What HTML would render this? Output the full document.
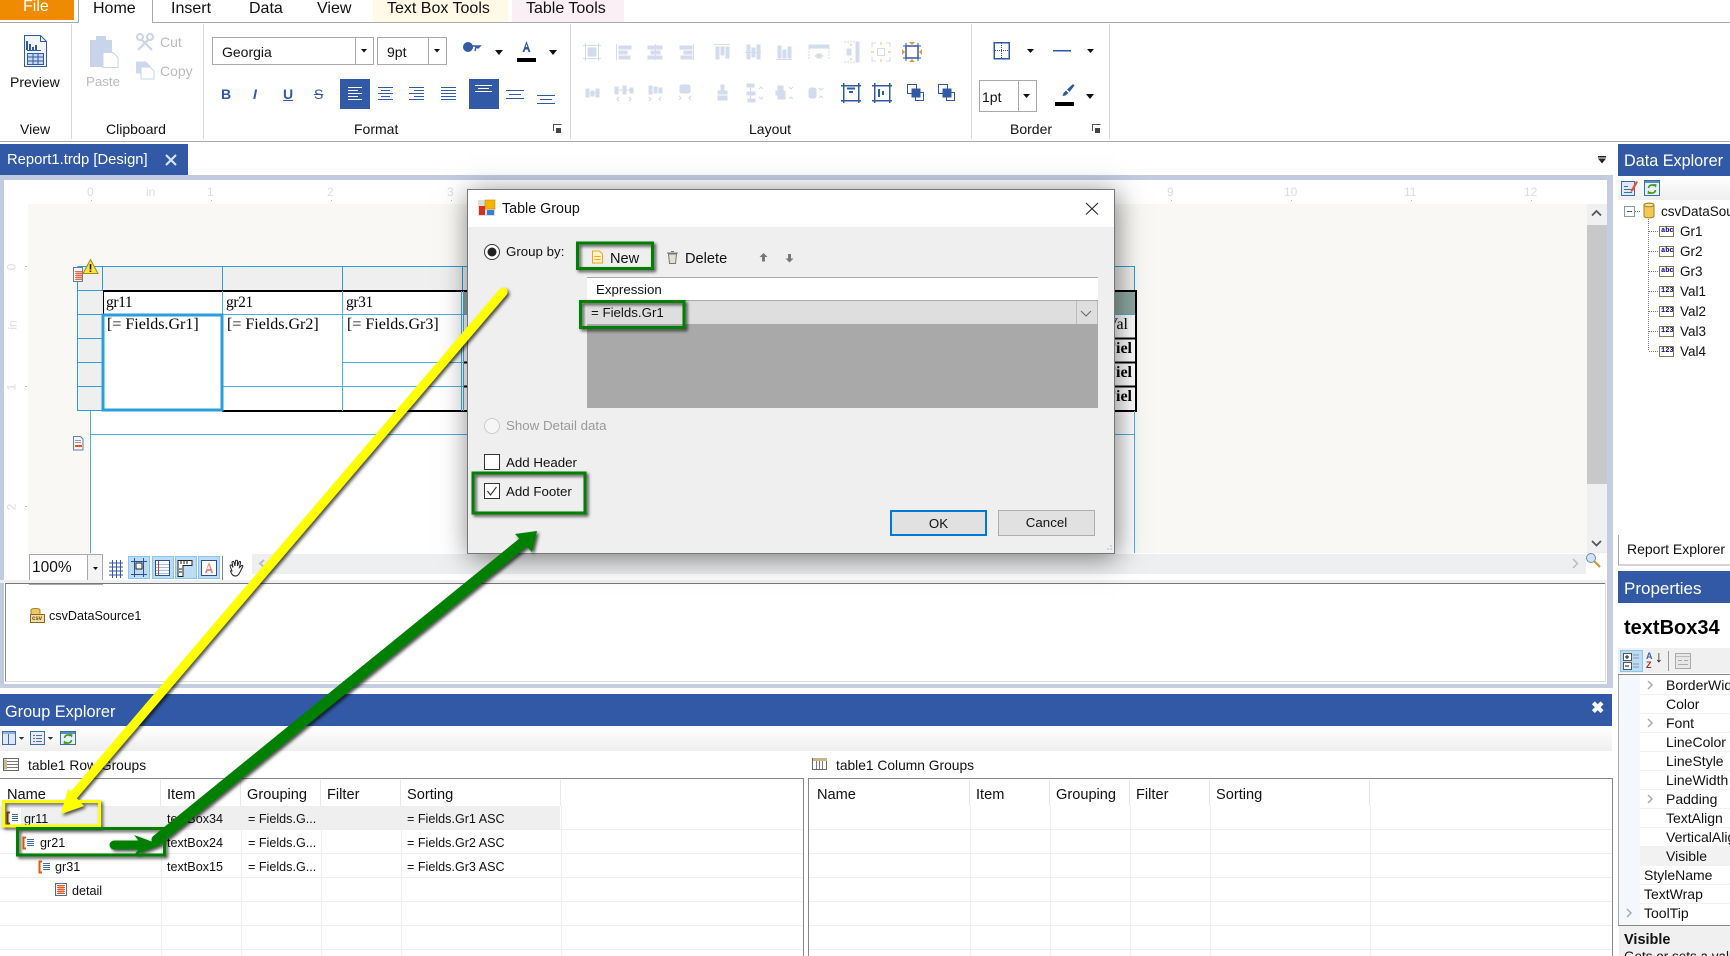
<!DOCTYPE html>
<html lang="en"><head><meta charset="utf-8"><title>Table Group</title>
<style>
html,body{margin:0;padding:0;background:#fff}
#p{position:relative;width:1730px;height:956px;overflow:hidden;background:#fff;font-family:"Liberation Sans",sans-serif;color:#111}
#p svg{position:absolute;left:0;top:0}
.t{position:absolute;white-space:nowrap;line-height:1}
.s{font-size:14px}.f{font-size:16px}.d{color:#bbb}
.m{font-size:13.3px}.g{font-size:12.6px}.h{font-size:14.6px}
.se{font-family:"Liberation Serif",serif;font-size:16px;color:#000}
.se2{letter-spacing:-.4px;font-size:15.5px}
.r{font-size:12px;color:#ddd}
.w{color:#fff}
.dl{position:absolute;left:467px;top:189px;width:646px;height:363px;background:#efefef;border:1px solid #777;box-shadow:2px 4px 26px rgba(0,0,0,.5)}
.dt{position:absolute;left:0;top:0;width:646px;height:37px;background:#fff}
.b{position:absolute;top:510px;height:26px;box-sizing:border-box;background:#e1e1e1;text-align:center;font-size:13.3px;line-height:24px}
.ic{font-size:7px;font-weight:bold;color:#000080;font-family:"Liberation Mono",monospace}
</style></head><body><div id="p">

<svg width="1730" height="956" viewBox="0 0 1730 956">
<g shape-rendering="crispEdges">
<rect x="0" y="0" width="74" height="20" fill="#ee8b00"/>
<rect x="373" y="0" width="135" height="22" fill="#fff9e7"/>
<rect x="512" y="0" width="112" height="22" fill="#fbeff6"/>
<path d="M0 22.5h78M152 22.5h1578M0 141.5h1730" stroke="#aaa" fill="none"/>
<path d="M78.5 0v23M152.5 0v23" stroke="#aaa" fill="none"/>
<path d="M71.5 24v115M203.5 24v115M570.5 24v115M971.5 24v115M1109.5 24v115" stroke="#d8d8d8" fill="none"/>
<rect x="212.5" y="37.5" width="161" height="27" fill="#fff" stroke="#aaa"/><path d="M355.5 38v27" stroke="#aaa"/>
<rect x="377.5" y="37.5" width="69" height="27" fill="#fff" stroke="#aaa"/><path d="M428.5 38v27" stroke="#aaa"/>
<rect x="979.5" y="80.5" width="57" height="31" fill="#fff" stroke="#aaa"/><path d="M1018.5 81v31" stroke="#aaa"/>
<rect x="340" y="79" width="30" height="30" fill="#3259a5"/>
<rect x="469" y="79" width="30" height="30" fill="#3259a5"/>
<rect x="0" y="144" width="188" height="31" fill="#3259a5"/>
<rect x="0" y="175" width="1613" height="5" fill="#c0cbe0"/>
<rect x="0" y="175" width="4" height="513" fill="#c0cbe0"/>
<rect x="1607" y="175" width="6" height="513" fill="#c5cee0"/>
<rect x="0" y="684" width="1613" height="4" fill="#c5cee0"/>
<rect x="4" y="580" width="1603" height="3" fill="#f0f0f0"/>
<rect x="5" y="583" width="1601" height="1" fill="#777"/>
<rect x="5" y="583" width="1" height="99" fill="#888"/>
<rect x="5" y="681" width="1601" height="1" fill="#ddd"/><rect x="1605" y="583" width="1" height="99" fill="#ddd"/>
<rect x="28" y="204" width="1559" height="349" fill="#f9f8f5"/>
<rect x="91" y="410" width="1043" height="143" fill="#fff"/>
<rect x="1587" y="204" width="20" height="349" fill="#f0f0f0"/>
<rect x="1587" y="225" width="20" height="259" fill="#c8c8c8"/>
<rect x="252" y="554" width="1334" height="20" fill="#eeeff0"/>
<path d="M91 200.5h1M211 200.5h1M331 200.5h1M451 200.5h1M571 200.5h1M691 200.5h1M811 200.5h1M931 200.5h1M1051 200.5h1M1171 200.5h1M1291 200.5h1M1411 200.5h1M1531 200.5h1M25 266.5h2M25 386.5h2M25 506.5h2" stroke="#bbb" fill="none"/>
<rect x="77" y="266" width="1058" height="25" fill="#efefef"/>
<rect x="77" y="290" width="26" height="120" fill="#efefef"/>
<rect x="103" y="291" width="1033" height="120" fill="#fff"/>
<rect x="463" y="292" width="672" height="22" fill="#8fa9a3"/>
<path d="M77.5 266.5h1057M77.5 266.5v144h25M77.5 290.5h1057M77.5 314.5h26M77.5 338.5h26M77.5 362.5h26M77.5 386.5h26M102.5 266v24M222.5 266v24M342.5 266v24M462.5 266v24" stroke="#2a9fdb" fill="none"/>
<path d="M1134.5 266v24" stroke="#2a9fdb" fill="none"/>
<path d="M103 291h1033M1136 290v121M222 411h915M463 338.5h673M463 362.5h673M463 386.5h673" stroke="#000" stroke-width="2" fill="none"/>
<path d="M103.5 291v24" stroke="#000" fill="none"/>
<path d="M103 314.5h1032M222.5 291v120M342.5 291v120M223 386.5h240M343 362.5h120M463.5 291v120M461.5 291v120" stroke="#4ab0e0" fill="none"/>
<rect x="103" y="315" width="119" height="95" fill="#fff" stroke="#2a9fdb" stroke-width="3"/>
<path d="M91 434.5h1043M90.5 411v142M1134.5 411v142" stroke="#4ab0e0" fill="none"/>
<rect x="29.5" y="554.5" width="73" height="30" fill="#fff" stroke="#aaa"/><rect x="88" y="555" width="14" height="25" fill="#f4f4f4"/><path d="M87.5 555v25" stroke="#aaa"/>
<rect x="0" y="580" width="110" height="3" fill="#f0f0f0"/>
<rect x="5" y="583" width="110" height="1" fill="#777"/>
<path d="M222.5 556v24" stroke="#888"/>
<rect x="128.5" y="556.5" width="21" height="22" fill="#bcdcf4" stroke="#8cc4f0"/>
<rect x="152.5" y="556.5" width="21" height="22" fill="#bcdcf4" stroke="#8cc4f0"/>
<rect x="175.5" y="556.5" width="21" height="22" fill="#bcdcf4" stroke="#8cc4f0"/>
<rect x="198.5" y="556.5" width="21" height="22" fill="#bcdcf4" stroke="#8cc4f0"/>
<rect x="0" y="694" width="1612" height="32" fill="#3259a5"/>
<rect x="1618" y="144" width="112" height="32" fill="#3259a5"/>
<rect x="1618" y="571" width="112" height="32" fill="#3259a5"/>
</g>
<defs><linearGradient id="gg" x1="0" y1="0" x2="0" y2="1"><stop offset="0" stop-color="#fff"/><stop offset="1" stop-color="#efefef"/></linearGradient></defs>
<rect x="0" y="726" width="1612" height="25" fill="url(#gg)"/>
<rect x="1618" y="176" width="112" height="24" fill="url(#gg)"/>
<g shape-rendering="crispEdges">
<rect x="0" y="806" width="560" height="23" fill="#efefef"/>
<rect x="10" y="808" width="11" height="18" fill="#fff"/>
<path d="M0 778.5h804M808 778.5h805M803.5 778v178M808.5 778v178M1612.5 778v178" stroke="#888" fill="none"/>
<path d="M0 829.5h803M0 853.5h803M0 877.5h803M0 901.5h803M0 925.5h803M0 949.5h803M809 829.5h803M809 853.5h803M809 877.5h803M809 901.5h803M809 925.5h803M809 949.5h803M161.5 806v150M241.5 806v150M321.5 806v150M401.5 806v150M561.5 806v150M970.5 806v150M1050.5 806v150M1130.5 806v150M1210.5 806v150M1370.5 806v150" stroke="#eee" fill="none"/>
<path d="M160.5 780v26M240.5 780v26M320.5 780v26M400.5 780v26M560.5 780v26M969.5 780v26M1049.5 780v26M1129.5 780v26M1209.5 780v26M1369.5 780v26" stroke="#e8e8e8" fill="none"/>
<path d="M10 812.5H7.5v11H10" stroke="#8a4a14" stroke-width="2" fill="none"/>
<path d="M12 814.5h6M12 816.5h6M12 818.5h6M12 820.5h6" stroke="#3a6ea5" fill="none"/>
<path d="M26 837.5h-2.5v11H26" stroke="#e85a00" stroke-width="2" fill="none"/>
<path d="M27 839.5h7M27 841.5h7M27 843.5h7M27 845.5h7" stroke="#3a6ea5" fill="none"/>
<path d="M42 861.5h-2.5v11H42" stroke="#e85a00" stroke-width="2" fill="none"/>
<path d="M43 863.5h7M43 865.5h7M43 867.5h7M43 869.5h7" stroke="#3a6ea5" fill="none"/>
<rect x="55.5" y="883.5" width="11" height="12" fill="#fff" stroke="#556b8a"/>
<path d="M57 885.5h8M57 887.5h8M57 889.5h8M57 891.5h8M57 893.5h8M59 885v9M61 885v9M63 885v9" stroke="#e0602a" fill="none"/>
<rect x="3.5" y="758.5" width="15" height="12" fill="#fff" stroke="#667"/>
<path d="M4 761.5h14M4 764.5h14M4 767.5h14" stroke="#778"/>
<path d="M4 759.5v10h3v-10z" fill="#c9b886"/>
<rect x="812.5" y="758.5" width="14" height="11" fill="#fff" stroke="#667"/>
<rect x="813" y="758" width="14" height="3" fill="#c9b886"/>
<path d="M816.5 761v8M819.5 761v8M822.5 761v8" stroke="#778"/>
<rect x="2.5" y="731.5" width="13" height="13" fill="#dfe8f4" stroke="#3a6ea5"/><path d="M8.5 732v12" stroke="#3a6ea5"/><rect x="3" y="732" width="12" height="2" fill="#8fb0d8"/>
<path d="M19 737h5l-2.500 3z" fill="#333"/>
<rect x="30.500" y="731.500" width="14" height="13" fill="#e4ecf6" stroke="#3a6ea5"/><path d="M33 735.500h2M36 735.500h6M33 738.500h2M36 738.500h6M33 741.500h2M36 741.500h6" stroke="#668"/>
<path d="M48 737h5l-2.500 3z" fill="#333"/>
<rect x="60.500" y="731.500" width="15" height="13" fill="#e8f0f8" stroke="#3a6ea5"/><rect x="61" y="732" width="14" height="2" fill="#5a8ac8"/>
<rect x="1621.500" y="181.500" width="13" height="14" fill="#dfe8f4" stroke="#3a6ea5"/><path d="M1624 186.500h4M1624 189.500h8M1624 192.500h8" stroke="#3a6ea5"/>
<rect x="1644.500" y="180.500" width="15" height="15" fill="#e8f0f8" stroke="#3a6ea5"/><rect x="1645" y="181" width="14" height="2" fill="#5a8ac8"/>
<rect x="1624.500" y="206.500" width="10" height="10" fill="#fff" stroke="#8899aa"/><path d="M1627 211.500h5" stroke="#3a5a8a"/>
<path d="M1635 211.500h6M1648.500 219v132M1649 231.500h10M1649 251.500h10M1649 271.500h10M1649 291.500h10M1649 311.500h10M1649 331.500h10M1649 351.500h10" stroke="#777" stroke-dasharray="1 1" fill="none"/>
<g fill="#fff" stroke="#8a7a50">
<rect x="1659.500" y="226.500" width="14" height="10"/><rect x="1659.500" y="246.500" width="14" height="10"/><rect x="1659.500" y="266.500" width="14" height="10"/><rect x="1659.500" y="286.500" width="14" height="10"/><rect x="1659.500" y="306.500" width="14" height="10"/><rect x="1659.500" y="326.500" width="14" height="10"/><rect x="1659.500" y="346.500" width="14" height="10"/>
</g>
<path d="M1618.500 535v30h112M1618.500 674v252" stroke="#aaa" fill="none"/>
<rect x="1618" y="648" width="112" height="25" fill="#f0f0f0"/>
<rect x="1620.500" y="650.500" width="22" height="21" fill="#bcdcf4" stroke="#8cc4f0"/>
<path d="M1668.500 651v20" stroke="#999"/>
<rect x="1619" y="675" width="21" height="250" fill="#f4f7fb"/>
<rect x="1640" y="847" width="90" height="19" fill="#f2f2f2"/>
<path d="M1640 694.500h90M1640 713.500h90M1640 732.500h90M1640 751.500h90M1640 770.500h90M1640 789.500h90M1640 808.500h90M1640 827.500h90M1640 846.500h90M1640 865.500h90M1640 884.500h90M1640 903.500h90" stroke="#f2f2f2"/>
<path d="M1618 674.500h112M1618 925.500h112" stroke="#888"/>
<rect x="1619" y="926" width="111" height="30" fill="#f0f0f0"/>
<rect x="1623.500" y="653.500" width="8" height="7" fill="#fff" stroke="#555"/><rect x="1623.500" y="662.500" width="8" height="7" fill="#fff" stroke="#555"/>
<path d="M1633 655h6M1633 658h6M1633 664h6M1633 667h6" stroke="#8899aa"/>
<path d="M1625 657h4M1627 655v4M1625 666h4" stroke="#111"/>
<rect x="1675.500" y="653.500" width="15" height="15" fill="#e8e8e8" stroke="#aaa"/><path d="M1678 660.500h4M1684 660.500h4M1678 664.500h10" stroke="#aaa"/><path d="M1676 656.500h14" stroke="#bbb"/>
</g>
<!-- pencil and refresh arrows -->
<path d="M1631 190l5-9 2 1-5 9-2.500 1z" fill="#e8503a"/>
<g fill="none" stroke="#3e9a12" stroke-width="1.600"><path d="M1648.500 188a3.500 3.500 0 0 1 6-2M1655.500 190a3.500 3.500 0 0 1-6 2"/></g>
<path d="M1653 184l3.500.2-.5 3.500zM1651 194l-3.500-.2.500-3.500z" fill="#3e9a12"/>
<g fill="none" stroke="#3e9a12" stroke-width="1.600"><path d="M64.500 738a3.500 3.500 0 0 1 6-2M71.500 740a3.500 3.500 0 0 1-6 2"/></g>
<path d="M69 734l3.500.2-.5 3.500zM67 744l-3.500-.2.500-3.500z" fill="#3e9a12"/>
<g fill="none" stroke="#3259a5">
<path d="M24.500 35.500h16l6 6v25h-22z" fill="#f2f6fc"/><path d="M40.500 35.500v6h6"/>
<path d="M27 50V41M30 50V44M33 50v-3M36 50v-5" stroke-width="2"/>
<path d="M27 50.500h14"/>
<rect x="27.500" y="53.500" width="16" height="11" fill="#c8d8f0"/><path d="M27.500 57h16M27.500 61h16M33 53.500v11M38 53.500v11"/>
</g>
<g fill="#c8d4ea">
<rect x="90" y="40" width="22" height="27"/><rect x="96" y="36" width="10" height="5"/>
<path d="M103 52.500h10l5 5v10h-15z" fill="#fff" stroke="#c8d4ea"/>
<path d="M136 61.500h10l4 4v8h-14z" opacity=".9"/>
<path d="M141 67h9l4 4v8h-13z" fill="#fff" stroke="#c8d4ea"/>
</g>
<g fill="none" stroke="#c8d4ea" stroke-width="2">
<circle cx="140" cy="37" r="3"/><circle cx="150" cy="37" r="3"/><path d="M142 40l10 10M148 40l-10 10"/>
</g>
<g fill="#111">
<path d="M361 49h6l-3 3.500zM434 49h6l-3 3.500zM495 50h8l-4 5zM549 50h8l-4 5zM1027 49h7l-3.500 4zM1087 49h7l-3.500 4zM1023 94h7l-3.500 4zM1086 94h8l-4 5zM93 567h5l-2.500 3z"/>
</g>
<path d="M463 47a5 5 0 0 1 5-5 5 5 0 0 1 5 5 5 5 0 0 1-5 5 5 5 0 0 1-5-5z" fill="#3259a5"/><path d="M472 46h8l-2 2-2-1-1 4" fill="none" stroke="#3259a5" stroke-width="1.500"/>
<path d="M526.500 41l-4 11h2l.8-2.500h2.400l.8 2.500h2zM526.500 44l.8 3h-1.600z" fill="#3259a5" fill-rule="evenodd"/>
<rect x="517" y="58" width="19" height="4" fill="#000"/>
<g stroke="#fff" shape-rendering="crispEdges"><path d="M348 87.500h14M348 90.500h10M348 93.500h14M348 96.500h10M348 99.500h14"/><path d="M475 85.500h17M478 88.500h11M475 91.500h17"/></g>
<g stroke="#3259a5" shape-rendering="crispEdges"><path d="M378 87.500h15M381 90.500h9M378 93.500h15M381 96.500h9M378 99.500h15M409 87.500h15M414 90.500h10M409 93.500h15M414 96.500h10M409 99.500h15M441 87.500h15M441 90.500h15M441 93.500h15M441 96.500h15M441 99.500h15M506 90.500h18M509 94.500h12M506 98.500h18M537 95.500h18M540 99.500h12M537 103.500h18"/></g>
<g fill="none" stroke="#555"><path d="M553.500 131v-6.500h8M1092.500 131v-6.500h8"/></g>
<path d="M556 128h5v5h-5zM1095 128h5v5h-5z" fill="#444"/>
<g fill="#d3dcec" stroke="#d3dcec" shape-rendering="crispEdges">
<g transform="translate(592,52)"><path d="M-9-6.500H9M-9 6.500H9M-6.500-9V9M6.500-9V9" fill="none"/><rect x="-4" y="-4" width="8" height="8"/></g>
<g transform="translate(624,52)"><path d="M-7.500-8V8" fill="none"/><rect x="-5" y="-6" width="12" height="3"/><rect x="-5" y="-1" width="8" height="3"/><rect x="-5" y="4" width="11" height="3"/></g>
<g transform="translate(655,52)"><path d="M.5-8V8" fill="none"/><rect x="-7" y="-6" width="14" height="3"/><rect x="-4" y="-1" width="9" height="3"/><rect x="-7" y="4" width="14" height="3"/></g>
<g transform="translate(686,52)"><path d="M7.500-8V8" fill="none"/><rect x="-6" y="-6" width="12" height="3"/><rect x="-2" y="-1" width="8" height="3"/><rect x="-5" y="4" width="11" height="3"/></g>
<g transform="translate(722,52)"><path d="M-8-7.500H8" fill="none"/><rect x="-6" y="-5" width="3" height="12"/><rect x="-1" y="-5" width="3" height="8"/><rect x="4" y="-5" width="3" height="11"/></g>
<g transform="translate(753,52)"><path d="M-8 .5H8" fill="none"/><rect x="-6" y="-7" width="3" height="14"/><rect x="-1" y="-4" width="3" height="9"/><rect x="4" y="-7" width="3" height="14"/></g>
<g transform="translate(784,52)"><path d="M-8 7.500H8" fill="none"/><rect x="-6" y="-6" width="3" height="12"/><rect x="-1" y="-2" width="3" height="8"/><rect x="4" y="-5" width="3" height="11"/></g>
<g transform="translate(819,52)"><rect x="-10" y="-7" width="20" height="3"/><path d="M-10-4V7M10-4V7" fill="none" stroke-dasharray="2 1"/><rect x="-2" y="2" width="4" height="4"/></g>
<g transform="translate(851,52)"><rect x="5" y="-10" width="3" height="20"/><path d="M-7-10H5M-7 10H5" fill="none" stroke-dasharray="2 1"/><rect x="-4" y="-3" width="4" height="6"/></g>
<g transform="translate(881,52)"><rect x="-3.500" y="-3.500" width="7" height="7" fill="#fff"/><path d="M-9-5v-4h4M9-5v-4h-4M-9 5v4h4M9 5v4h-4" fill="none"/></g>
</g>
<g fill="#fbdcae" shape-rendering="crispEdges"><rect x="815" y="55" width="2" height="2"/><rect x="821" y="55" width="2" height="2"/><rect x="850" y="44" width="2" height="2"/><rect x="850" y="58" width="2" height="2"/><rect x="880" y="42" width="2" height="3"/><rect x="880" y="59" width="2" height="3"/><rect x="871" y="51" width="3" height="2"/><rect x="888" y="51" width="3" height="2"/></g>
<g transform="translate(912,52)"><rect x="-6" y="-6" width="12" height="12" fill="#fff" stroke="#3259a5" stroke-width="1.500"/><path d="M-6-9v3M6-9v3M-6 6v3M6 6v3M-9-6h3M-9 6h3M6-6h3M6 6h3" stroke="#3259a5"/><path d="M-3-10H3L0-7zM-3 10H3L0 7zM-10-3V3L-7 0zM10-3V3L7 0z" fill="#f0962a"/></g>
<g fill="#d3dcec" stroke="#d3dcec" shape-rendering="crispEdges">
<g transform="translate(592,93)"><rect x="-6" y="-4" width="3" height="8"/><rect x="-1" y="-2" width="3" height="5"/><rect x="4" y="-4" width="3" height="8"/><path d="M-3 0H5" fill="none"/></g>
<g transform="translate(624,90)"><rect x="-9" y="-3" width="3" height="7"/><rect x="-1" y="-4" width="3" height="8"/><rect x="6" y="-2" width="3" height="5"/><path d="M-6 0H7M-5 7l-2 2 2 2M5 7l2 2-2 2" fill="none"/></g>
<g transform="translate(655,90)"><rect x="-6" y="-4" width="3" height="8"/><rect x="-1" y="-3" width="3" height="6"/><rect x="4" y="-2" width="3" height="5"/><path d="M-6 7l2 2-2 2M6 7l-2 2 2 2" fill="none"/></g>
<g transform="translate(685,89)"><rect x="-5" y="-4" width="10" height="8" rx="2"/><path d="M-6 7l2 2-2 2M6 7l-2 2 2 2" fill="none"/></g>
<g transform="translate(722,93)"><rect x="-1" y="-8" width="3" height="5"/><rect x="-4" y="-2" width="9" height="3"/><rect x="-4" y="3" width="9" height="4"/></g>
<g transform="translate(751,93)"><rect x="-4" y="-9" width="7" height="3"/><rect x="-4" y="-1" width="8" height="3"/><rect x="-3" y="6" width="7" height="3"/><path d="M-.5-6V6M8-4l2-2 2 2M8 4l2 2 2-2" fill="none"/></g>
<g transform="translate(782,93)"><rect x="-4" y="-7" width="5" height="5"/><rect x="-6" y="-2" width="9" height="4"/><rect x="-4" y="2" width="7" height="4"/><path d="M7-6l2 2 2-2M7 6l2-2 2 2" fill="none"/></g>
<g transform="translate(813,93)"><rect x="-4" y="-5" width="7" height="10" rx="2"/><path d="M6-5l2 2 2-2M6 5l2-2 2 2" fill="none"/></g>
</g>
<g fill="none" stroke="#3259a5" shape-rendering="crispEdges">
<g transform="translate(851,93)"><path d="M-10-7.500h20M-10 7.500h20M-7.500-10V10M7.500-10V10" stroke-width="1.500"/><path d="M-4-4.500h8M-2-1h4" stroke-width="2"/></g>
<g transform="translate(882,93)"><path d="M-10-7.500h20M-10 7.500h20M-7.500-10V10M7.500-10V10" stroke-width="1.500"/><path d="M-3-4v8M1-2v4" stroke-width="2"/></g>
<g transform="translate(916,93)"><rect x="-8.500" y="-8.500" width="9" height="9" fill="#fff"/><rect x="-.5" y="-.5" width="8" height="8" fill="#fff"/><rect x="-4" y="-4" width="8" height="8" fill="#3259a5"/></g>
<g transform="translate(947,93)"><rect x="-8.500" y="-8.500" width="9" height="9" fill="#fff"/><rect x="-.5" y="-.5" width="8" height="8" fill="#fff"/><rect x="-4" y="-4" width="8" height="8" fill="#3259a5"/></g>
</g>
<g fill="none" stroke="#3259a5" shape-rendering="crispEdges"><rect x="994" y="42.500" width="15" height="16" stroke-width="1.500"/><path d="M1001.500 43v15M995 50.500h14" stroke-dasharray="1 1"/><path d="M1053 50.500h18" stroke-width="1.500"/></g>
<path d="M1073 84l1.500 1.500-5 6.500-2.500-2.500zM1066 90.500l2.500 2.500-3 2.500-3 .5 1-3z" fill="#3259a5"/>
<rect x="1055" y="102" width="19" height="4" fill="#000"/>
<path d="M166 155l10 10M176 155l-10 10" stroke="#dfe6f2" stroke-width="2"/>
<path d="M1598 156h8v1.500h-8zM1598 158.500h8l-4 5z" fill="#222"/>
<path d="M1592 215.500l4.500-4.500 4.500 4.500M1592 541l4.500 4.500 4.500-4.500" fill="none" stroke="#555" stroke-width="1.800"/>
<path d="M264 560l-4 3.500 4 3.500" fill="none" stroke="#bbb" stroke-width="2"/>
<path d="M1573 559l4.500 4.500-4.500 4.500" fill="none" stroke="#bbb" stroke-width="1.500"/>
<circle cx="1591" cy="558" r="4.500" fill="#cfe4f8" stroke="#6a8ab0"/><path d="M1594 561l6 6" stroke="#c9942a" stroke-width="2"/>
<path d="M109 563h14M109 567h14M109 571h14M109 575h14M112.500 560v18M116.500 560v18M120.500 560v18" stroke="#3259a5" fill="none" shape-rendering="crispEdges"/>
<path d="M131 561.500h16M131 574.500h16M134.500 558v19M143.500 558v19" stroke="#2c4f8f" fill="none" shape-rendering="crispEdges"/><rect x="136" y="563" width="6" height="6" fill="#fff" stroke="#222"/>
<rect x="155.500" y="560.500" width="14" height="15" fill="#fff" stroke="#2c4f8f"/><path d="M156 564.500h13M156 567.500h13M156 570.500h13M156 573.500h13" stroke="#a8c0e0" shape-rendering="crispEdges"/><path d="M158.500 561v14" stroke="#c04040"/>
<path d="M178 560.500h14v5h-9v11h-5z" fill="#fff" stroke="#222"/><path d="M181 561v3M184 561v3M187 561v3M179 569h3M179 572h3" stroke="#222"/>
<rect x="201.500" y="560.500" width="15" height="15" fill="#fff" stroke="#2c4f8f"/><path d="M209 562l-4 11h2l.6-2h3l.6 2h2zM207 569l2-4 1 4z" fill="#f08080" fill-rule="evenodd"/>
<path d="M232 571l-2-5c0-1 1-1.500 2-.5l1 2-1-5c0-1 1.500-1.500 2-.5l1 4 .5-5c0-1 2-1 2 0l0 5 1.500-4c.5-1 2-.5 1.500.5l-1 5 2-2c1-.5 2 .5 1 1.500l-3 6c-1 2-2 3-4 3-3 0-4-2-5-5z" fill="#fff" stroke="#222"/>
<rect x="73.500" y="267.500" width="9" height="14" fill="#f2f4f8" stroke="#6a7f9a"/>
<path d="M75 271.500h7M75 273.500h7M75 275.500h7M75 277.500h7M75 279.500h7M77 271v9M79 271v9M81 271v9" stroke="#e0562a" fill="none" stroke-width=".8"/>
<path d="M90.500 259.500L98 273.500H83z" fill="#ffe23a" stroke="#9a8a20"/><path d="M90.500 264v5.500M90.500 270.500v1.500" stroke="#111" stroke-width="1.600"/>
<path d="M73.500 436.500h7l2.500 2.500v11H73.500z" fill="#f2f4f8" stroke="#6a7f9a"/>
<path d="M75 440.500h6M75 442.500h6" stroke="#99a"/><rect x="75" y="445" width="7" height="2" fill="#e0562a"/>
<path d="M31 610c0-2 9-2 9 0v7h-9z" fill="#f0c860" stroke="#a08030"/><rect x="30.500" y="614.500" width="14" height="8" fill="#f4dca0" stroke="#8a6a20"/>
<path d="M1644 205c0-2.500 10-2.500 10 0v11c0 2.500-10 2.500-10 0z" fill="#f2c850" stroke="#a88420"/><ellipse cx="1649" cy="205" rx="5" ry="1.800" fill="#fbe6a0" stroke="#a88420"/>
</svg>

<div class="t f w" style="left:23px;top:-1px">File</div>
<div class="t f" style="left:93px;top:1px">Home</div>
<div class="t f" style="left:171px;top:1px">Insert</div>
<div class="t f" style="left:249px;top:1px">Data</div>
<div class="t f" style="left:317px;top:1px">View</div>
<div class="t f" style="left:387px;top:1px">Text Box Tools</div>
<div class="t f" style="left:526px;top:1px">Table Tools</div>
<div class="t s" style="left:10px;top:75px">Preview</div>
<div class="t s" style="left:20px;top:122px">View</div>
<div class="t s" style="left:106px;top:122px">Clipboard</div>
<div class="t s" style="left:354px;top:122px">Format</div>
<div class="t s" style="left:749px;top:122px">Layout</div>
<div class="t s" style="left:1010px;top:122px">Border</div>
<div class="t m d" style="left:86px;top:75px">Paste</div>
<div class="t s d" style="left:160px;top:35px">Cut</div>
<div class="t s d" style="left:160px;top:64px">Copy</div>
<div class="t s" style="left:222px;top:45px">Georgia</div>
<div class="t s" style="left:387px;top:45px">9pt</div>
<div class="t s" style="left:982px;top:90px">1pt</div>
<div class="t" style="left:221px;top:87px;font-size:14px;font-weight:bold;color:#3259a5">B</div>
<div class="t" style="left:253px;top:87px;font-size:14px;font-style:italic;font-weight:bold;color:#3259a5">I</div>
<div class="t" style="left:283px;top:87px;font-size:14px;font-weight:bold;color:#3259a5;text-decoration:underline">U</div>
<div class="t" style="left:314px;top:87px;font-size:14px;color:#3259a5;text-decoration:line-through">S</div>
<div class="t w" style="left:7px;top:153px;font-size:14.800px">Report1.trdp [Design]</div>
<div class="t r" style="left:87px;top:186px">0</div><div class="t r" style="left:146px;top:186px">in</div><div class="t r" style="left:207px;top:186px">1</div><div class="t r" style="left:327px;top:186px">2</div><div class="t r" style="left:447px;top:186px">3</div><div class="t r" style="left:1167px;top:186px">9</div><div class="t r" style="left:1284px;top:186px">10</div><div class="t r" style="left:1404px;top:186px">11</div><div class="t r" style="left:1524px;top:186px">12</div>
<div class="t r" style="left:8px;top:261px;transform:rotate(-90deg)">0</div><div class="t r" style="left:8px;top:319px;transform:rotate(-90deg)">in</div><div class="t r" style="left:8px;top:381px;transform:rotate(-90deg)">1</div><div class="t r" style="left:8px;top:501px;transform:rotate(-90deg)">2</div>
<div class="t se se2" style="left:106px;top:295px">gr11</div><div class="t se se2" style="left:226px;top:295px">gr21</div><div class="t se se2" style="left:346px;top:295px">gr31</div>
<div class="t se" style="left:107px;top:317px">[= Fields.Gr1]</div><div class="t se" style="left:227px;top:317px">[= Fields.Gr2]</div><div class="t se" style="left:347px;top:317px">[= Fields.Gr3]</div>
<div class="t se" style="right:602px;top:317px">Val</div>
<div class="t se" style="right:598px;top:341px;font-weight:bold">Fiel</div><div class="t se" style="right:598px;top:365px;font-weight:bold">Fiel</div><div class="t se" style="right:598px;top:389px;font-weight:bold">Fiel</div>
<div class="t" style="left:32px;top:560px;font-size:15.500px">100%</div>
<div class="t g" style="left:49px;top:610px">csvDataSource1</div>
<div class="t" style="left:32px;top:616px;font-size:6px;font-weight:bold;color:#6a5010">csv</div>
<div class="t w" style="left:5px;top:704px;font-size:16.300px">Group Explorer</div>
<div class="t w" style="left:1591px;top:701px;font-size:16px;font-weight:bold">✖</div>
<div class="t" style="left:28px;top:759px;font-size:13.800px">table1 Row Groups</div>
<div class="t" style="left:836px;top:759px;font-size:13.800px">table1 Column Groups</div>
<div class="t h" style="left:7px;top:788px">Name</div><div class="t h" style="left:167px;top:788px">Item</div><div class="t h" style="left:247px;top:788px">Grouping</div><div class="t h" style="left:327px;top:788px">Filter</div><div class="t h" style="left:407px;top:788px">Sorting</div>
<div class="t h" style="left:817px;top:788px">Name</div><div class="t h" style="left:976px;top:788px">Item</div><div class="t h" style="left:1056px;top:788px">Grouping</div><div class="t h" style="left:1136px;top:788px">Filter</div><div class="t h" style="left:1216px;top:788px">Sorting</div>
<div class="t g" style="left:24px;top:813px">gr11</div><div class="t g" style="left:167px;top:813px">textBox34</div><div class="t g" style="left:248px;top:813px">= Fields.G...</div><div class="t g" style="left:407px;top:813px">= Fields.Gr1 ASC</div>
<div class="t g" style="left:40px;top:837px">gr21</div><div class="t g" style="left:167px;top:837px">textBox24</div><div class="t g" style="left:248px;top:837px">= Fields.G...</div><div class="t g" style="left:407px;top:837px">= Fields.Gr2 ASC</div>
<div class="t g" style="left:55px;top:861px">gr31</div><div class="t g" style="left:167px;top:861px">textBox15</div><div class="t g" style="left:248px;top:861px">= Fields.G...</div><div class="t g" style="left:407px;top:861px">= Fields.Gr3 ASC</div>
<div class="t g" style="left:72px;top:885px">detail</div>
<div class="t w" style="left:1624px;top:153px;font-size:16.200px">Data Explorer</div>
<div class="t" style="left:1661px;top:205px;font-size:13.500px">csvDataSource1</div>
<div class="t ic" style="left:1661px;top:228px">abc</div><div class="t ic" style="left:1661px;top:248px">abc</div><div class="t ic" style="left:1661px;top:268px">abc</div><div class="t ic" style="left:1661px;top:288px">123</div><div class="t ic" style="left:1661px;top:308px">123</div><div class="t ic" style="left:1661px;top:328px">123</div><div class="t ic" style="left:1661px;top:348px">123</div>
<div class="t" style="left:1680px;top:225px;font-size:13.500px">Gr1</div><div class="t" style="left:1680px;top:245px;font-size:13.500px">Gr2</div><div class="t" style="left:1680px;top:265px;font-size:13.500px">Gr3</div><div class="t" style="left:1680px;top:285px;font-size:13.500px">Val1</div><div class="t" style="left:1680px;top:305px;font-size:13.500px">Val2</div><div class="t" style="left:1680px;top:325px;font-size:13.500px">Val3</div><div class="t" style="left:1680px;top:345px;font-size:13.500px">Val4</div>
<div class="t s" style="left:1627px;top:542px">Report Explorer</div>
<div class="t w" style="left:1624px;top:580px;font-size:17px">Properties</div>
<div class="t" style="left:1624px;top:618px;font-size:20px;font-weight:bold;color:#000">textBox34</div>
<div class="t" style="left:1646px;top:652px;font-size:9px;font-weight:bold;color:#3a5fb0">A</div><div class="t" style="left:1646px;top:661px;font-size:9px;font-weight:bold;color:#a03030">Z</div><div class="t" style="left:1655px;top:650px;font-size:16px">↓</div>
<div class="t s" style="left:1666px;top:678px">BorderWidth</div>
<div class="t s" style="left:1666px;top:697px">Color</div>
<div class="t s" style="left:1666px;top:716px">Font</div>
<div class="t s" style="left:1666px;top:735px">LineColor</div>
<div class="t s" style="left:1666px;top:754px">LineStyle</div>
<div class="t s" style="left:1666px;top:773px">LineWidth</div>
<div class="t s" style="left:1666px;top:792px">Padding</div>
<div class="t s" style="left:1666px;top:811px">TextAlign</div>
<div class="t s" style="left:1666px;top:830px">VerticalAlign</div>
<div class="t s" style="left:1666px;top:849px">Visible</div>
<div class="t s" style="left:1644px;top:868px">StyleName</div>
<div class="t s" style="left:1644px;top:887px">TextWrap</div>
<div class="t s" style="left:1644px;top:906px">ToolTip</div>
<div class="t" style="left:1624px;top:933px;font-size:14.500px;font-weight:bold">Visible</div>
<div class="t" style="left:1624px;top:950px;font-size:13.500px">Gets or sets a value</div>
<svg width="1730" height="956" viewBox="0 0 1730 956" style="pointer-events:none"><path d="M1648 681l4 4-4 4M1648 719l4 4-4 4M1648 795l4 4-4 4M1627 909l4 4-4 4" fill="none" stroke="#aaa" stroke-width="1.500"/></svg>

<div class="dl"><div class="dt"></div></div>
<svg width="1730" height="956" viewBox="0 0 1730 956">
<rect x="478" y="200" width="17" height="16" fill="#ddd"/><rect x="485" y="200" width="10" height="9" fill="#f4b400" stroke="#c98a00" stroke-width=".6"/><rect x="479" y="206" width="6" height="9" fill="#d8301e"/><rect x="487" y="210" width="7" height="5" fill="#3a7bd5"/>
<path d="M1086 203l12 11.500M1098 203l-12 11.500" stroke="#222" stroke-width="1.100"/>
<circle cx="492" cy="252" r="7.500" fill="#fff" stroke="#333"/><circle cx="492" cy="252" r="4.500" fill="#222"/>
<circle cx="492" cy="426" r="7.500" fill="#f6f6f6" stroke="#ccc"/>
<path d="M592.500 251h7l3 3v9h-10z" fill="#fff2c4" stroke="#eca820"/><path d="M594.500 256.500h6M594.500 259.500h6" stroke="#eca820"/>
<path d="M668.500 254h8l-1 9.500h-6zM667 253h11M671 251.500h3" fill="#e4e0d0" stroke="#777"/>
<path d="M763.500 253l-4 4h2.500v4.500h3V257h2.500zM789.500 262.500l-4-4H788V254h3v4.500h2.500z" fill="#777"/>
<g shape-rendering="crispEdges">
<rect x="587" y="278" width="511" height="22" fill="#fff"/>
<path d="M587 277.500h511" stroke="#aaa"/>
<rect x="587" y="301" width="511" height="23" fill="#dedede"/>
<path d="M587 300.500h511M587 324.500h511" stroke="#aaa"/>
<path d="M1076.500 301v23M1097.500 301v23" stroke="#bbb"/>
<rect x="587" y="325" width="511" height="83" fill="#a9a9a9"/>
<rect x="484.500" y="454.500" width="15" height="15" fill="#fff" stroke="#333"/>
<rect x="484.500" y="483.500" width="15" height="15" fill="#fff" stroke="#333"/>
<path d="M1107 549h2M1110 549h2M1110 546h2" stroke="#bbb"/>
</g>
<path d="M1081 311l5 5 5-5" fill="none" stroke="#666"/>
<path d="M487.500 491l3 4 6-8" fill="none" stroke="#333" stroke-width="1.100"/>
</svg>
<div class="t" style="left:502px;top:202px;font-size:14.300px">Table Group</div>
<div class="t m" style="left:506px;top:245px">Group by:</div>
<div class="t h" style="left:610px;top:252px">New</div>
<div class="t h" style="left:685px;top:252px">Delete</div>
<div class="t m" style="left:596px;top:283px">Expression</div>
<div class="t m" style="left:591px;top:306px">= Fields.Gr1</div>
<div class="t m" style="left:506px;top:419px;color:#9a9a9a">Show Detail data</div>
<div class="t m" style="left:506px;top:456px">Add Header</div>
<div class="t m" style="left:506px;top:485px">Add Footer</div>
<div class="b" style="left:890px;width:97px;border:2px solid #0078d7;line-height:23px">OK</div>
<div class="b" style="left:998px;width:97px;border:1px solid #adadad">Cancel</div>

<svg width="1730" height="956" viewBox="0 0 1730 956">
<defs><filter id="ds" x="-5%" y="-5%" width="110%" height="110%"><feDropShadow dx="2" dy="2" stdDeviation="1.500" flood-color="#000" flood-opacity=".7"/></filter></defs>
<g filter="url(#ds)" fill="none">
<rect x="577.500" y="243" width="75" height="25.500" stroke="#008000" stroke-width="3"/>
<rect x="580.500" y="301.500" width="103.500" height="26" stroke="#008000" stroke-width="3"/>
<rect x="473" y="473" width="112" height="40" stroke="#008000" stroke-width="3"/>
<rect x="3.500" y="801.500" width="96" height="24.500" stroke="#ff0" stroke-width="3"/>
<rect x="17.500" y="828.500" width="147" height="26.500" stroke="#008000" stroke-width="3"/>
<path d="M503 292L72 797" stroke="#ff0" stroke-width="9" stroke-linecap="round"/>
<path d="M61 814L84 806L68 789z" fill="#ff0"/>
<path d="M157 840L525 541" stroke="#008000" stroke-width="11" stroke-linecap="round"/>
<path d="M537 531L515 534L532 552z" fill="#008000"/>
<path d="M114 845H140" stroke="#008000" stroke-width="9" stroke-linecap="round"/>
<path d="M161 845L134 835L142 845L134 855z" fill="#008000"/>
</g>
</svg>
</div></body></html>
